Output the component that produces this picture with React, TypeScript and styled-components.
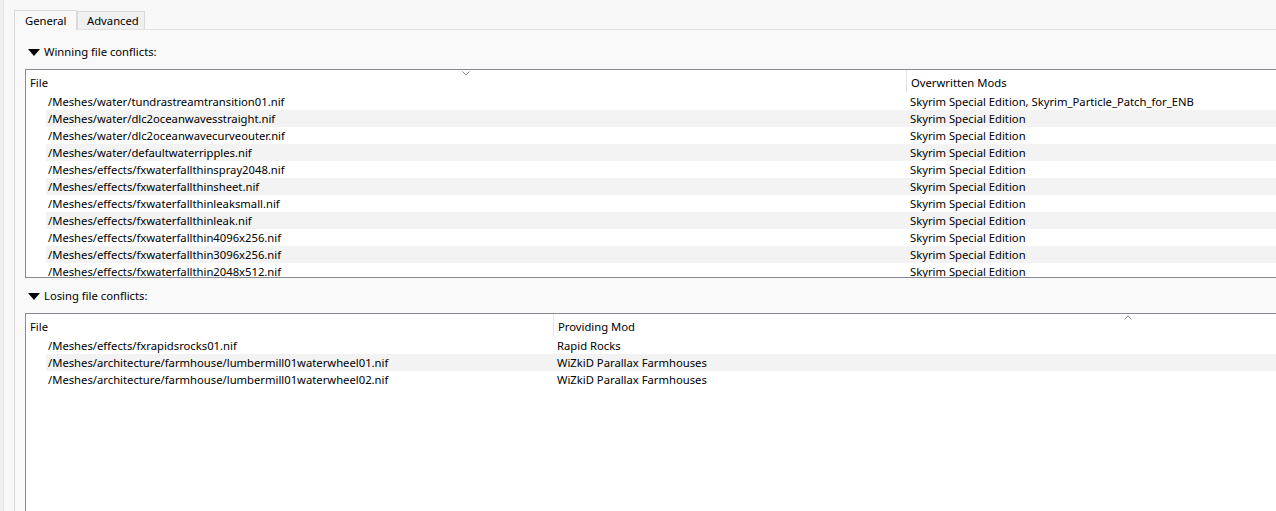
import React from 'react';
import styled, { createGlobalStyle } from 'styled-components';

const GlobalStyle = createGlobalStyle`
  html, body {
    margin: 0;
    padding: 0;
    background: #f0f0f0;
  }
  body {
    font-family: "Noto Sans", "Open Sans", sans-serif;
    font-size: 11.25px;
    color: #000;
  }
`;

interface Conflict {
  file: string,
  mod: string,
}

const winning: Conflict[] = [
  { file: '/Meshes/water/tundrastreamtransition01.nif', mod: 'Skyrim Special Edition, Skyrim_Particle_Patch_for_ENB' },
  { file: '/Meshes/water/dlc2oceanwavesstraight.nif', mod: 'Skyrim Special Edition' },
  { file: '/Meshes/water/dlc2oceanwavecurveouter.nif', mod: 'Skyrim Special Edition' },
  { file: '/Meshes/water/defaultwaterripples.nif', mod: 'Skyrim Special Edition' },
  { file: '/Meshes/effects/fxwaterfallthinspray2048.nif', mod: 'Skyrim Special Edition' },
  { file: '/Meshes/effects/fxwaterfallthinsheet.nif', mod: 'Skyrim Special Edition' },
  { file: '/Meshes/effects/fxwaterfallthinleaksmall.nif', mod: 'Skyrim Special Edition' },
  { file: '/Meshes/effects/fxwaterfallthinleak.nif', mod: 'Skyrim Special Edition' },
  { file: '/Meshes/effects/fxwaterfallthin4096x256.nif', mod: 'Skyrim Special Edition' },
  { file: '/Meshes/effects/fxwaterfallthin3096x256.nif', mod: 'Skyrim Special Edition' },
  { file: '/Meshes/effects/fxwaterfallthin2048x512.nif', mod: 'Skyrim Special Edition' },
];

const losing: Conflict[] = [
  { file: '/Meshes/effects/fxrapidsrocks01.nif', mod: 'Rapid Rocks' },
  { file: '/Meshes/architecture/farmhouse/lumbermill01waterwheel01.nif', mod: 'WiZkiD Parallax Farmhouses' },
  { file: '/Meshes/architecture/farmhouse/lumbermill01waterwheel02.nif', mod: 'WiZkiD Parallax Farmhouses' },
];

const SortArrow: React.FC<{ up?: boolean }> = ({ up }) => (
  <svg width="8" height="5" viewBox="0 0 8 5">
    <polyline
      points={up ? '0.5,4.5 4,1 7.5,4.5' : '0.5,0.5 4,4 7.5,0.5'}
      fill="none"
      stroke="#8a8a8a"
      strokeWidth="1"
    />
  </svg>
);

const ConflictTable: React.FC<{
  rows: Conflict[],
  modTitle: string,
  fileWidth: number,
  totalWidth: number,
  sortOn: 'file' | 'mod',
  sortUp?: boolean,
  height?: number,
}> = ({ rows, modTitle, fileWidth, totalWidth, sortOn, sortUp, height }) => (
  <Table $height={height} $width={totalWidth}>
    <HeaderRow>
      <HeaderCell style={{ width: fileWidth }}>
        File
        {sortOn === 'file' && <SortMark><SortArrow up={sortUp} /></SortMark>}
      </HeaderCell>
      <HeaderCell $divider>
        {modTitle}
        {sortOn === 'mod' && <SortMark><SortArrow up={sortUp} /></SortMark>}
      </HeaderCell>
    </HeaderRow>
    {rows.map((row, i) => (
      <Row key={row.file} $striped={i % 2 === 1}>
        <FileCell style={{ width: fileWidth - 20 }}>{row.file}</FileCell>
        <ModCell>{row.mod}</ModCell>
      </Row>
    ))}
  </Table>
);

const App: React.FC = () => {
  return (
    <>
      <GlobalStyle />
      <Page>
        <Frame>
          <TabBar>
            <Tab $active>General</Tab>
            <Tab>Advanced</Tab>
          </TabBar>
          <Pane>
            <SectionLabel $gap={13}>
              <Triangle />
              Winning file conflicts:
            </SectionLabel>
            <ConflictTable
              rows={winning}
              modTitle="Overwritten Mods"
              fileWidth={880}
              totalWidth={1500}
              sortOn="file"
              height={209}
            />
            <SectionLabel $gap={9}>
              <Triangle />
              Losing file conflicts:
            </SectionLabel>
            <ConflictTable
              rows={losing}
              modTitle="Providing Mod"
              fileWidth={527}
              totalWidth={1676}
              sortOn="mod"
              sortUp
            />
          </Pane>
        </Frame>
      </Page>
    </>
  );
};

export default App;

const Page = styled.div`
  display: flex;
  width: 1276px;
  height: 511px;
  overflow: hidden;
  background: #f0f0f0;
`;

const Frame = styled.div`
  flex: 1;
  display: flex;
  flex-direction: column;
  margin-left: 3px;
  padding: 10px 0 0 10px;
  border-left: 1px solid #e2e2e2;
  background: #f8f8f8;
  min-width: 0;
  overflow: hidden;
`;

const TabBar = styled.div`
  display: flex;
  align-items: flex-end;
  height: 20px;
`;

const Tab = styled.div<{ $active?: boolean }>`
  position: relative;
  z-index: ${p => (p.$active ? 1 : 0)};
  box-sizing: border-box;
  height: ${p => (p.$active ? '20px' : '18px')};
  width: ${p => (p.$active ? '63px' : '68px')};
  padding-left: ${p => (p.$active ? '10px' : '9px')};
  margin-bottom: ${p => (p.$active ? '0' : '1px')};
  display: flex;
  align-items: center;
  border: 1px solid #d9d9d9;
  border-bottom: none;
  background: ${p => (p.$active ? '#f9f9f9' : '#f0f0f0')};
  line-height: 16px;
  white-space: nowrap;
`;

const Pane = styled.div`
  flex: 1;
  display: flex;
  flex-direction: column;
  margin-top: -1px;
  padding-left: 10px;
  border-top: 1px solid #e3e3e3;
  border-left: 1px solid #dadada;
  background: #f9f9f9;
  min-height: 0;
`;

const SectionLabel = styled.div<{ $gap: number }>`
  display: flex;
  align-items: center;
  height: 18px;
  margin-top: ${p => p.$gap}px;
  margin-bottom: 8px;
  padding-left: 3px;
  gap: 4px;
  line-height: 18px;
`;

const Triangle = styled.span`
  width: 0;
  height: 0;
  border-left: 6px solid transparent;
  border-right: 6px solid transparent;
  border-top: 7px solid #000;
`;

const Table = styled.div<{ $height?: number, $width: number }>`
  box-sizing: border-box;
  width: ${p => p.$width}px;
  height: ${p => (p.$height ? `${p.$height}px` : 'auto')};
  flex: ${p => (p.$height ? '0 0 auto' : '1')};
  overflow: hidden;
  border: 1px solid #878a93;
  border-right: none;
  border-bottom: ${p => (p.$height ? '1px solid #878a93' : 'none')};
  background: #fff;
`;

const HeaderRow = styled.div`
  display: flex;
  height: 23px;
`;

const HeaderCell = styled.div<{ $divider?: boolean }>`
  position: relative;
  box-sizing: border-box;
  flex: ${p => (p.$divider ? '1' : '0 0 auto')};
  padding: 2px 0 0 4px;
  height: 22px;
  line-height: 22px;
  border-left: ${p => (p.$divider ? '1px solid #e5e5e5' : 'none')};
  white-space: nowrap;
`;

const SortMark = styled.span`
  position: absolute;
  top: 1px;
  left: 50%;
  margin-left: -4px;
  line-height: 0;
`;

const Row = styled.div<{ $striped?: boolean }>`
  display: flex;
  box-sizing: border-box;
  height: 17px;
  margin-left: 20px;
  padding-top: 1px;
  line-height: 16px;
  background: ${p => (p.$striped ? '#f3f3f3' : 'transparent')};
  white-space: nowrap;
`;

const FileCell = styled.div`
  box-sizing: border-box;
  flex: 0 0 auto;
  padding-left: 2px;
  overflow: hidden;
`;

const ModCell = styled.div`
  flex: 1;
  padding-left: 4px;
`;
